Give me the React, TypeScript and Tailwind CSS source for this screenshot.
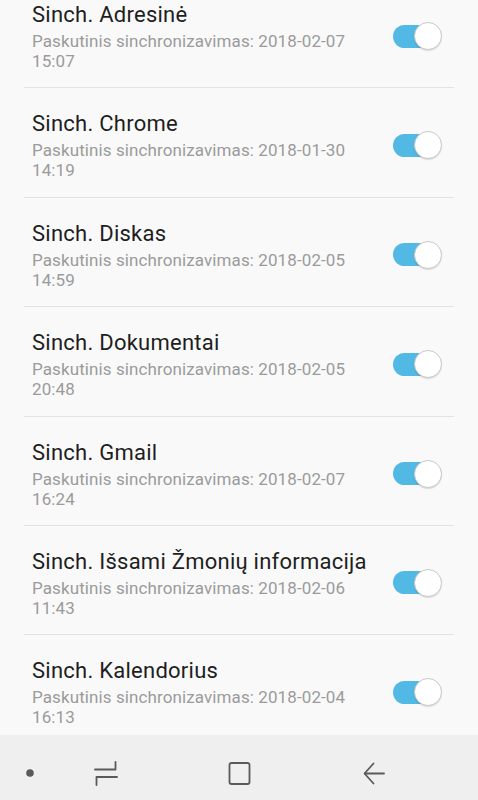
import React from "react";

const items = [
  { t: "Sinch. Adresinė", d: "2018-02-07", h: "15:07" },
  { t: "Sinch. Chrome", d: "2018-01-30", h: "14:19" },
  { t: "Sinch. Diskas", d: "2018-02-05", h: "14:59" },
  { t: "Sinch. Dokumentai", d: "2018-02-05", h: "20:48" },
  { t: "Sinch. Gmail", d: "2018-02-07", h: "16:24" },
  { t: "Sinch. Išsami Žmonių informacija", d: "2018-02-06", h: "11:43" },
  { t: "Sinch. Kalendorius", d: "2018-02-04", h: "16:13" },
];

function Toggle() {
  return (
    <div className="relative w-[50px] h-[30px] flex items-center shrink-0">
      <div className="w-[46px] h-[23px] rounded-full bg-[#52b8e4] ml-[1px]" />
      <div className="absolute right-0 top-[1px] w-[28px] h-[28px] rounded-full bg-white border border-[#c9c9c9] shadow-[0_1px_1px_rgba(0,0,0,0.12)]" />
    </div>
  );
}

export default function App() {
  return (
    <div
      className="w-[478px] h-[800px] overflow-hidden bg-[#f9f9f9] flex flex-col"
      style={{ fontFamily: "Roboto, 'Noto Sans', sans-serif" }}
    >
      <div className="flex-1 overflow-hidden">
        <div className="mt-[-21px] flex flex-col">
          {items.map((it, i) => (
            <div key={i} className="mx-[24px] border-b border-[#e2e2e2] pt-[22px] pb-[16.4px] pl-[8px] pr-[12px] flex items-center">
              <div className="flex-1 min-w-0">
                <div className="text-[22px] leading-[28px] tracking-[0.25px] text-[#1e1e1e] whitespace-nowrap">{it.t}</div>
                <div className="mt-[2px] text-[17px] leading-[20px] tracking-[0.1px] text-[#9b9b9b] whitespace-nowrap">
                  Paskutinis sinchronizavimas: {it.d}
                  <br />
                  {it.h}
                </div>
              </div>
              <Toggle />
            </div>
          ))}
        </div>
      </div>
      <div className="h-[65px] shrink-0 bg-[#efefef] relative">
        <svg width="478" height="65" viewBox="0 0 478 65" className="block">
          <circle cx="30" cy="38" r="3.8" fill="#5a5a5a" />
          <g fill="none" stroke="#5a5a5a" strokeWidth="1.8" strokeLinecap="round" strokeLinejoin="round">
            <path d="M95 34.5 H115.5 V27" />
            <path d="M96.5 50 V42 H117" />
            <rect x="229.5" y="28" width="20" height="21" rx="2" />
            <path d="M365 38.5 H384" />
            <path d="M373.5 28.5 L364.5 38.5 L373.5 48.5" />
          </g>
        </svg>
      </div>
    </div>
  );
}
